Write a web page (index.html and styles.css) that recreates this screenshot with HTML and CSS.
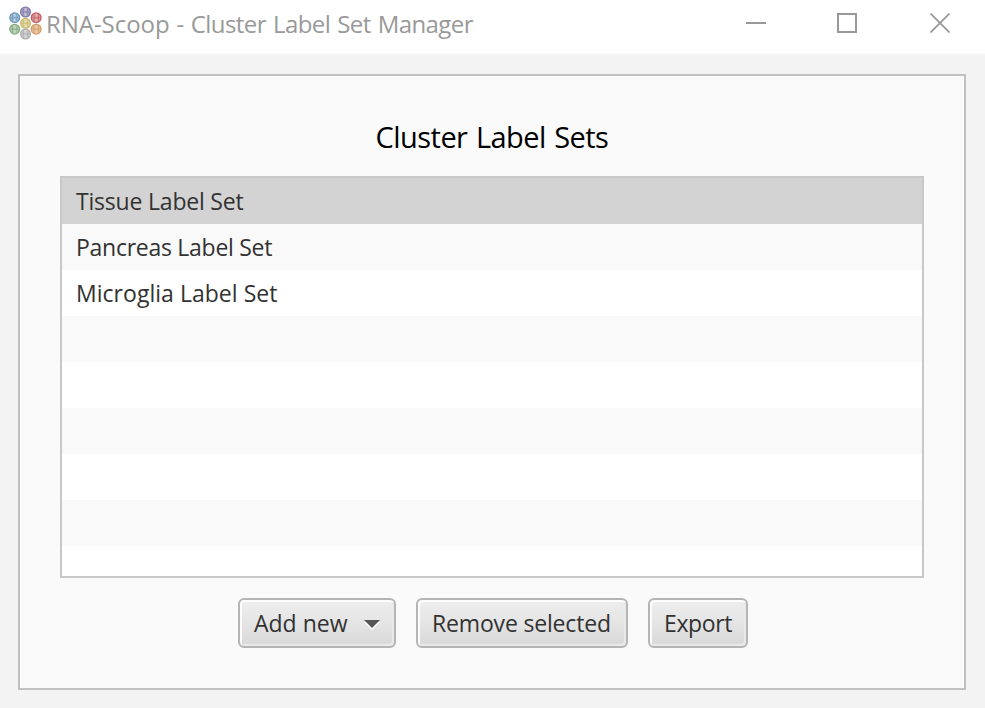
FILE: index.html
```
<!DOCTYPE html>
<html lang="en">
<head>
<meta charset="utf-8">
<title>RNA-Scoop - Cluster Label Set Manager</title>
<link rel="stylesheet" href="styles.css">
</head>
<body>
<header class="titlebar">
  <svg class="logo" width="34" height="34" viewBox="0 0 34 34">
    <defs>
      <g id="dot">
        <circle r="4.9" fill="currentColor" fill-opacity=".6" stroke="currentColor" stroke-width="1.3"/>
        <path d="M-2.2-3.4V3.4M2.2-3.4V3.4M-4 0H4" stroke="currentColor" stroke-width="1" stroke-opacity=".8"/>
        <path d="M0-3.5V-1.5M0 1.5V3.5" stroke="#fff" stroke-width="1" stroke-opacity=".35"/>
      </g>
    </defs>
    <use href="#dot" x="17.5" y="6" color="#8079a8"/>
    <use href="#dot" x="6.7" y="11.7" color="#6d98bd"/>
    <use href="#dot" x="28.2" y="11.7" color="#c45f64"/>
    <use href="#dot" x="17.5" y="17.3" color="#cbb96a"/>
    <use href="#dot" x="6.7" y="23.2" color="#86ab80"/>
    <use href="#dot" x="28.2" y="23.2" color="#d69a61"/>
    <use href="#dot" x="17.5" y="28" color="#adadad"/>
  </svg>
  <h1 class="window-title"><span class="app-name">RNA-Scoop</span> - Cluster Label Set Manager</h1>
  <div class="controls">
    <svg width="20" height="20" viewBox="0 0 20 20"><path d="M0 10H20"/></svg>
    <svg width="20" height="20" viewBox="0 0 20 20"><path d="M1 1H19V19H1Z"/></svg>
    <svg width="20" height="20" viewBox="0 0 20 20"><path class="cross" d="M.5.5L19.5 19.5M19.5.5L.5 19.5"/></svg>
  </div>
</header>
<main class="panel">
  <h2 class="heading"><span>Cluster Label Sets</span></h2>
  <ul class="list">
    <li class="selected"><span class="tissue">Tissue Label Set</span></li>
    <li><span class="pancreas">Pancreas Label Set</span></li>
    <li><span class="microglia">Microglia Label Set</span></li>
    <li></li><li></li><li></li><li></li><li></li><li></li>
  </ul>
  <div class="actions">
    <button class="btn add"><span>Add new</span><svg class="arrow" width="16" height="10" viewBox="0 0 16 10"><path d="M0 2H16L8 10Z" fill="#fff"/><path d="M0 0H16L8 8Z" fill="#555"/></svg></button>
    <button class="btn remove"><span>Remove selected</span></button>
    <button class="btn export"><span>Export</span></button>
  </div>
</main>
</body>
</html>
```
FILE: styles.css
```
* { box-sizing: border-box; }
body {
  margin: 0;
  height: 708px;
  overflow: hidden;
  background: #f3f3f3;
  font-family: "Open Sans", "Noto Sans", sans-serif;
  font-size: 23px;
  color: #323232;
}
.titlebar {
  display: flex;
  align-items: flex-start;
  height: 54px;
  padding: 0 35px 0 8px;
  background: #fff;
  border-bottom: 1px solid #fbfbfb;
}
.logo { flex: none; margin-top: 6px; }
.window-title {
  margin: 0 0 0 4px;
  font-size: 24px;
  font-weight: 400;
  line-height: 48px;
  letter-spacing: -0.58px;
  word-spacing: 1.4px;
  white-space: nowrap;
  color: #999;
}
.app-name { letter-spacing: -0.05px; }
.controls {
  display: flex;
  gap: 72px;
  margin: 13px 0 0 auto;
}
.controls svg { fill: none; stroke: #999; stroke-width: 2; }
.controls svg:nth-child(2) { margin-right: 1px; margin-left: -1px; }
.controls .cross { stroke-width: 1.8; }
.panel {
  width: 948px;
  height: 616px;
  margin: 20px 0 0 18px;
  padding: 40px 40px 0;
  background: #fafafa;
  border: 2px solid #c1c1c1;
}
.heading {
  margin: 0;
  height: 60px;
  font-size: 29px;
  font-weight: 400;
  line-height: 42px;
  letter-spacing: -0.55px;
  word-spacing: 1.5px;
  text-align: center;
  white-space: nowrap;
  color: #000;
}
.list {
  height: 402px;
  margin: 0;
  padding: 0;
  overflow: hidden;
  list-style: none;
  background: #fff;
  border: 2px solid #c8c8c8;
}
.list li {
  height: 46px;
  padding-left: 14px;
  line-height: 47px;
  white-space: nowrap;
}
.list li:nth-child(even) { background: #f9f9f9; }
.list .selected { background: #d3d3d3; }
.tissue { letter-spacing: -0.2px; }
.pancreas { letter-spacing: -0.27px; }
.microglia { letter-spacing: 0.03px; }
.actions {
  display: flex;
  gap: 20px;
  justify-content: center;
  margin: 20px 0 0 2px;
}
.btn {
  display: flex;
  align-items: center;
  height: 50px;
  padding: 0 0 0 14px;
  border: 2px solid #b5b5b5;
  border-radius: 6px;
  background: linear-gradient(#efefef, #d9d9d9);
  box-shadow: inset 2px 2px 0 #fcfcfc, inset -2px -2px 0 #e9e9e9;
  font: inherit;
  line-height: 46px;
  color: #323232;
  white-space: nowrap;
}
.add { width: 158px; }
.remove { width: 212px; letter-spacing: -0.17px; }
.export { width: 100px; letter-spacing: -0.4px; }
.arrow { margin: 3px 14px 0 auto; }
```
